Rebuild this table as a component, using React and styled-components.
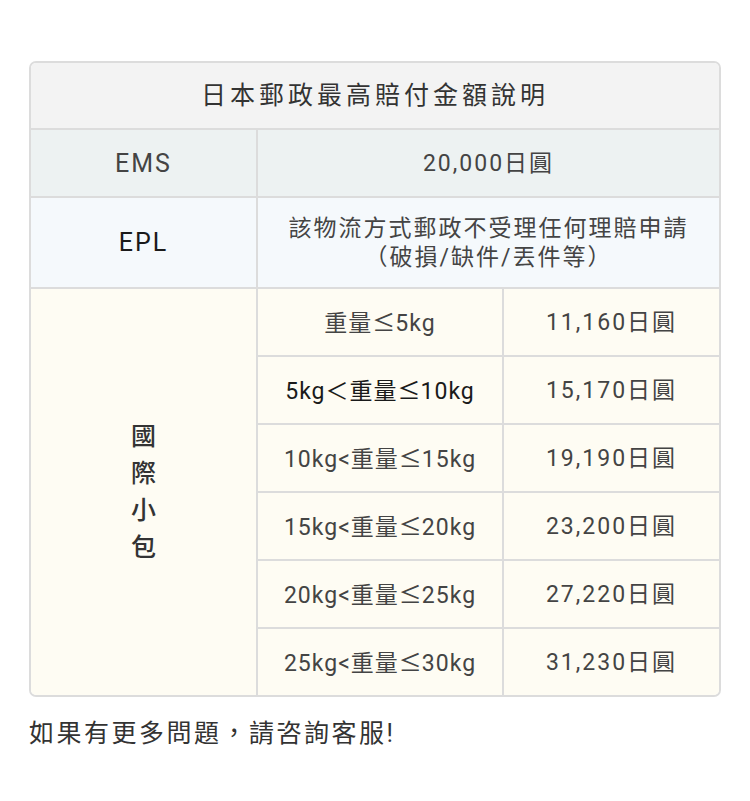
import React from 'react';
import styled, { createGlobalStyle } from 'styled-components';

const GlobalStyle = createGlobalStyle`
  body {
    margin: 0;
    background: #fff;
    font-family: Roboto, "Noto Sans CJK TC", sans-serif;
    color: #444;
  }
`;

const Page = styled.div`
  padding: 61px 29px 0 29px;
`;

const Frame = styled.div`
  border: 2px solid #dcdcdc;
  border-radius: 7px;
  overflow: hidden;
`;

const Table = styled.table`
  width: 100%;
  border-collapse: collapse;
  border-style: hidden;
  table-layout: fixed;
`;

const bgs = {
  head: '#f3f3f3',
  ems: '#edf2f2',
  epl: '#f5f9fc',
  pack: '#fefcf3',
};

const Cell = styled.td`
  border: 2px solid #dcdcdc;
  background: ${p => bgs[p.$tone] || '#fff'};
  text-align: center;
  vertical-align: middle;
  height: ${p => p.$h || 66}px;
  padding: 0 4px;
  font-size: ${p => p.$size || 23}px;
  letter-spacing: ${p => p.$ls ?? 2}px;
  color: ${p => (p.$dark ? '#1a1a1a' : '#444')};
  line-height: 29px;
  white-space: nowrap;
`;

const Title = styled(Cell)`
  font-size: 25px;
  letter-spacing: 4px;
  color: #333;
`;

const Sym = styled.span`
  font-family: "Noto Sans CJK TC", sans-serif;
  letter-spacing: 0;
`;

const Vertical = styled.div`
  display: flex;
  flex-direction: column;
  align-items: center;
  font-size: 25px;
  line-height: 37px;
  color: #333;
  font-weight: 500;
  letter-spacing: 0;
`;

const Note = styled.p`
  margin: 20px 0 0 0;
  font-size: 25px;
  line-height: 34px;
  letter-spacing: 2.5px;
  color: #333;
`;

const rows = [
  ['', '重量', '5kg', '11,160日圓', false],
  ['5kg＜', '重量', '10kg', '15,170日圓', true],
  ['10kg<', '重量', '15kg', '19,190日圓', false],
  ['15kg<', '重量', '20kg', '23,200日圓', false],
  ['20kg<', '重量', '25kg', '27,220日圓', false],
  ['25kg<', '重量', '30kg', '31,230日圓', false],
];

export default function App() {
  return (
    <Page>
      <GlobalStyle />
      <Frame>
        <Table>
          <colgroup>
            <col style={{ width: 226 }} />
            <col style={{ width: 246 }} />
            <col />
          </colgroup>
          <tbody>
            <tr>
              <Title colSpan={3} $tone="head" $h={65}>日本郵政最高賠付金額說明</Title>
            </tr>
            <tr>
              <Cell $tone="ems" $size={25} $h={66}>EMS</Cell>
              <Cell $tone="ems" colSpan={2}>20,000日圓</Cell>
            </tr>
            <tr>
              <Cell $tone="epl" $size={25} $dark $h={89}>EPL</Cell>
              <Cell $tone="epl" colSpan={2}>
                該物流方式郵政不受理任何理賠申請
                <br />
                （破損/缺件/丟件等）
              </Cell>
            </tr>
            {rows.map((r, i) => (
              <tr key={i}>
                {i === 0 && (
                  <Cell $tone="pack" rowSpan={rows.length}>
                    <Vertical>
                      <span>國</span>
                      <span>際</span>
                      <span>小</span>
                      <span>包</span>
                    </Vertical>
                  </Cell>
                )}
                <Cell $tone="pack" $dark={r[4]} $ls={1}>
                  {r[0]}{r[1]}<Sym>≤</Sym>{r[2]}
                </Cell>
                <Cell $tone="pack">{r[3]}</Cell>
              </tr>
            ))}
          </tbody>
        </Table>
      </Frame>
      <Note>如果有更多問題，請咨詢客服!</Note>
    </Page>
  );
}
